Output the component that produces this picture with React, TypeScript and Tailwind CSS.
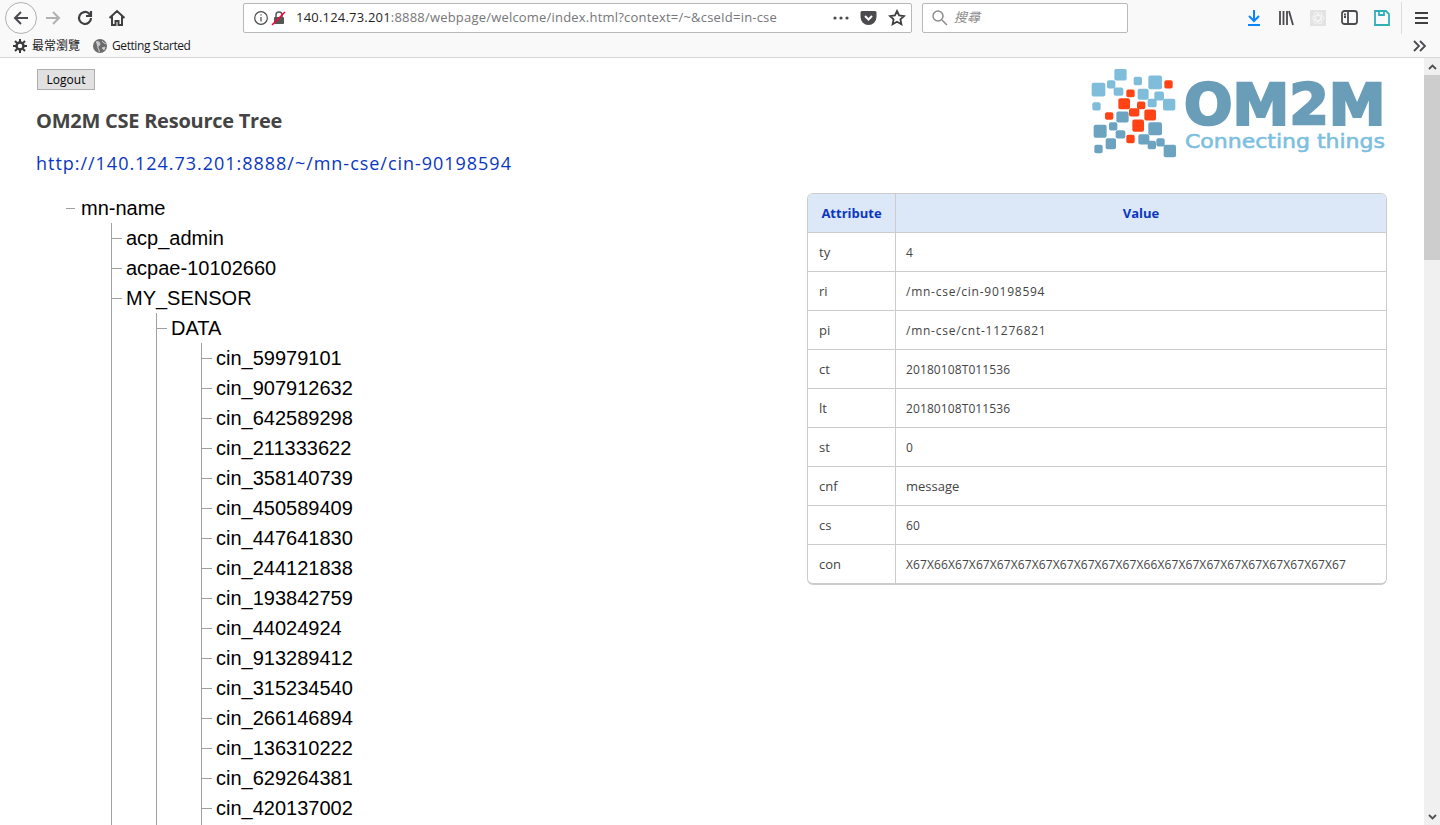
import React from "react";

const cins = ["cin_59979101","cin_907912632","cin_642589298","cin_211333622","cin_358140739","cin_450589409","cin_447641830","cin_244121838","cin_193842759","cin_44024924","cin_913289412","cin_315234540","cin_266146894","cin_136310222","cin_629264381","cin_420137002"];

const num = "text-[12px] tracking-[0.1px]";
const path = "text-[12px] tracking-[0.75px]";
const rows: [string, string, string][] = [
  ["ty","4",num],["ri","/mn-cse/cin-90198594",path],["pi","/mn-cse/cnt-11276821",path],["ct","20180108T011536",num],["lt","20180108T011536",num],["st","0",num],["cnf","message",""],["cs","60",num],["con","X67X66X67X67X67X67X67X67X67X67X67X66X67X67X67X67X67X67X67X67X67",num],
];

function Node({ label, top }: { label: string; top?: boolean }) {
  return (
    <div className="flex items-center h-[30px] whitespace-nowrap">
      <span className={top ? "w-[9px] h-px bg-[#a0a0a0] mr-[6px] shrink-0" : "w-[10px] h-px bg-[#a0a0a0] mr-[4px] shrink-0"} />
      <span>{label}</span>
    </div>
  );
}

const blue = "#7fbddb", red = "#ff4314", mid = "#6ba3c0";
const squares: [number, number, number, number, string][] = [
  [106,28,34,32,blue],[164,52,22,22,blue],[208,48,38,38,blue],[38,70,38,38,blue],[84,62,22,22,blue],[104,84,26,22,blue],[176,88,30,30,blue],[226,96,26,24,blue],[252,118,34,32,blue],[206,118,24,22,blue],[40,128,22,22,blue],
  [256,62,22,22,red],[142,90,22,20,red],[118,116,32,30,red],[174,126,22,20,red],[150,146,28,22,red],[196,150,32,30,red],[78,158,22,20,red],[160,180,32,34,red],[142,226,22,22,red],
  [112,156,34,30,mid],[90,188,22,22,mid],[44,196,36,36,mid],[110,212,26,22,mid],[80,236,28,30,mid],[208,188,38,36,mid],[178,224,30,28,mid],[206,244,22,22,mid],[232,236,22,22,mid],[254,256,34,34,mid],[46,256,22,22,mid],
];

function Logo() {
  return (
    <svg width="296" height="90" viewBox="0 0 296 90">
      {squares.map(([x, y, w, h, c], i) => (
        <rect key={i} x={(x - 36) / 3} y={(y - 27) / 3 - 0.5} width={w / 3 + 1} height={h / 3 + 1} rx="2" fill={c} />
      ))}
      <text x="93" y="56" fill="#6a9db8" stroke="#6a9db8" strokeWidth="2.500" fontFamily="'DejaVu Sans', sans-serif" fontWeight="700" fontSize="57">OM2M</text>
      <text x="94" y="79" textLength="200" lengthAdjust="spacingAndGlyphs" fill="#7dbfe0" stroke="#7dbfe0" strokeWidth="0.6" fontFamily="'DejaVu Sans', sans-serif" fontSize="20">Connecting things</text>
    </svg>
  );
}

export default function App() {
  return (
    <div className="h-screen w-full overflow-hidden flex flex-col bg-white font-['Liberation_Sans',sans-serif]">
      <header className="h-[58px] shrink-0 bg-[#f9f9fa] border-b border-[#d7d7db] flex flex-col font-['Open_Sans','Noto_Sans_CJK_TC',sans-serif]">
        <div className="h-[35px] flex items-center">
          <div className="ml-[5px] w-[32px] h-[32px] rounded-full border border-[#b1b1b3] bg-[#fbfbfb] flex items-center justify-center">
            <svg width="18" height="18" viewBox="0 0 18 18" fill="none" stroke="#4a4a4f" strokeWidth="2"><path d="M16 9H3M9 3L3 9l6 6" /></svg>
          </div>
          <svg className="ml-[7px]" width="18" height="18" viewBox="0 0 18 18" fill="none" stroke="#b1b1b3" strokeWidth="2"><path d="M2 9h13M9 3l6 6-6 6" /></svg>
          <svg className="ml-[14px]" width="18" height="18" viewBox="0 0 18 18" fill="none" stroke="#3f3f42" strokeWidth="2.200"><path d="M15 9a6 6 0 1 1-2-4.500L15 7M15 2v5h-5" /></svg>
          <svg className="ml-[14px]" width="18" height="18" viewBox="0 0 18 18" fill="none" stroke="#3f3f42" strokeWidth="2"><path d="M1.500 9L9 2l7.500 7M4 7.500V16h3.500v-4h3v4H14V7.500" /></svg>
          <div className="ml-[117px] w-[669px] h-[30px] bg-white border border-[#b9b9b9] rounded-[2px] flex items-center text-[13px]">
            <svg className="ml-[9px]" width="16" height="16" viewBox="0 0 16 16" fill="none" stroke="#4a4a4f" strokeWidth="1.200"><circle cx="8" cy="8" r="6.300" /><path d="M8 7v4.500M8 4.200v1.400" /></svg>
            <svg className="ml-[2px]" width="16" height="16" viewBox="0 0 16 16"><rect x="3" y="7" width="10" height="7" rx="1" fill="#555" /><path d="M5 7V5a3 3 0 0 1 6 0v2" fill="none" stroke="#555" strokeWidth="1.500" /><path d="M1 15L14 2" stroke="#ff0039" strokeWidth="1.600" /></svg>
            <span className="ml-[9px] tracking-[0.2px] whitespace-nowrap text-[#1f1f1f]">140.124.73.201<span className="text-[#767679]">:8888/webpage/welcome/index.html?context=/~&amp;cseId=in-cse</span></span>
            <div className="ml-auto flex items-center">
              <svg width="18" height="6" viewBox="0 0 18 6" fill="#4a4a4f"><circle cx="3" cy="3" r="1.600" /><circle cx="9" cy="3" r="1.600" /><circle cx="15" cy="3" r="1.600" /></svg>
              <svg className="ml-[10px]" width="17" height="16" viewBox="0 0 17 16"><path d="M2 1h13a1.500 1.500 0 0 1 1.500 1.500V7a8 8 0 0 1-16 0V2.500A1.500 1.500 0 0 1 2 1z" fill="#4a4a4f" /><path d="M5 6l3.500 3.500L12 6" fill="none" stroke="#fff" strokeWidth="2" /></svg>
              <svg className="ml-[11px] mr-[5px]" width="18" height="18" viewBox="0 0 18 18" fill="none" stroke="#3f3f42" strokeWidth="1.800"><path d="M9 2l2.100 4.500 4.900.6-3.600 3.300 1 4.900L9 12.800l-4.400 2.500 1-4.900L2 7.100l4.900-.6z" /></svg>
            </div>
          </div>
          <div className="ml-[10px] w-[206px] h-[30px] bg-white border border-[#b9b9b9] rounded-[2px] flex items-center">
            <svg className="ml-[8px]" width="17" height="17" viewBox="0 0 17 17" fill="none" stroke="#8c8c8e" strokeWidth="1.500"><circle cx="7" cy="7" r="5" /><path d="M11 11l5 5" /></svg>
            <span className="ml-[6px] text-[13px] italic text-[#8a8a8a]">搜尋</span>
          </div>
          <svg className="ml-[119px]" width="14" height="16" viewBox="0 0 14 16" fill="none" stroke="#0a84ff" strokeWidth="2"><path d="M7 0v10M2 6l5 5 5-5M1 15h12" /></svg>
          <svg className="ml-[17px]" width="16" height="16" viewBox="0 0 16 16" fill="none" stroke="#4a4a4f" strokeWidth="1.800"><path d="M2 1v14M5.500 1v14M9 1v14M11 1l4 14" /></svg>
          <div className="ml-[16px] w-[16px] h-[16px] bg-[#e3e3e3] flex items-center justify-center">
            <svg width="14" height="14" viewBox="0 0 14 14" fill="none" stroke="#f6f6f6" strokeWidth="0.900"><ellipse cx="7" cy="7" rx="6" ry="2.500" /><ellipse cx="7" cy="7" rx="6" ry="2.500" transform="rotate(60 7 7)" /><ellipse cx="7" cy="7" rx="6" ry="2.500" transform="rotate(120 7 7)" /></svg>
          </div>
          <svg className="ml-[15px]" width="17" height="15" viewBox="0 0 17 15" fill="none" stroke="#4a4a4f" strokeWidth="1.800"><rect x="1" y="1" width="15" height="13" rx="2.500" /><path d="M7 1v13M3 4.500h2M3 7h2" /></svg>
          <svg className="ml-[16px]" width="16" height="16" viewBox="0 0 16 16" fill="none" stroke="#2fb0b6" strokeWidth="1.800"><path d="M1 1h11l3 3v11H1zM5 1v4h5V1" /></svg>
          <div className="ml-[11px] w-px h-[32px] bg-[#dcdcdf]" />
          <svg className="ml-[13px]" width="13" height="12" viewBox="0 0 13 12" fill="none" stroke="#3f3f42" strokeWidth="2"><path d="M0 1h13M0 6h13M0 11h13" /></svg>
        </div>
        <div className="flex-1 flex items-center text-[12px] text-[#1a1a1a]">
          <svg className="ml-[13px]" width="14" height="14" viewBox="0 0 14 14"><circle cx="7" cy="7" r="3.500" fill="none" stroke="#3a3a3c" strokeWidth="2.500" /><path d="M7 0v3M7 11v3M0 7h3M11 7h3M2 2l2 2M10 10l2 2M2 12l2-2M10 4l2-2" stroke="#3a3a3c" strokeWidth="2" /></svg>
          <span className="ml-[5px]">最常瀏覽</span>
          <svg className="ml-[13px]" width="14" height="14" viewBox="0 0 14 14"><circle cx="7" cy="7" r="7" fill="#6b6b6e" /><path d="M3 3c2-1 4 0 4 2S4 7 5 9s2 3 1 4M9 2c1 2 3 2 4 3M9 9l3-1-1 3z" fill="#c9c9cb" stroke="#c9c9cb" /></svg>
          <span className="ml-[5px] tracking-[-0.42px]">Getting Started</span>
          <svg className="ml-auto mr-[13px]" width="14" height="12" viewBox="0 0 14 12" fill="none" stroke="#4a4a4f" strokeWidth="1.800"><path d="M1 1l5 5-5 5M7 1l5 5-5 5" /></svg>
        </div>
      </header>

      <div className="flex-1 min-h-0 flex">
        <main className="flex-1 min-w-0 flex justify-between overflow-hidden">
          <div className="pl-[36px]">
            <button className="block ml-px mt-[11px] w-[58px] h-[21px] pt-px bg-[#e1e1e1] border border-[#adadad] text-[12px] text-black font-['Open_Sans',sans-serif]">Logout</button>
            <h2 className="mt-[17px] h-[27px] leading-[27px] text-[20px] font-bold tracking-[-0.25px] text-[#444] font-['Open_Sans',sans-serif] whitespace-nowrap">OM2M CSE Resource Tree</h2>
            <a className="block mt-[16px] h-[26px] leading-[26px] text-[18px] tracking-[0.97px] text-[#0a37c0] font-['Open_Sans',sans-serif] whitespace-nowrap">http://140.124.73.201:8888/~/mn-cse/cin-90198594</a>
            <div className="mt-[17px] ml-[30px] text-[20px] text-black">
              <Node label="mn-name" top />
              <div className="ml-[45px] border-l border-[#a0a0a0]">
                <Node label="acp_admin" />
                <Node label="acpae-10102660" />
                <Node label="MY_SENSOR" />
                <div className="ml-[44px] border-l border-[#a0a0a0]">
                  <Node label="DATA" />
                  <div className="ml-[44px] border-l border-[#a0a0a0] pb-[10px]">
                    {cins.map((c) => <Node key={c} label={c} />)}
                  </div>
                </div>
              </div>
            </div>
          </div>
          <div className="w-[580px] mr-[37px] shrink-0 flex flex-col items-end">
            <div className="mt-[11px] h-[90px]"><Logo /></div>
            <table className="mt-[34px] w-full border-separate border-spacing-0 border-2 border-t border-r border-l border-[#cccccc] rounded-[6px] text-[13px] text-[#444] font-['Open_Sans',sans-serif] overflow-hidden">
              <thead>
                <tr className="h-[39px] bg-[#dce8f8] text-[#0b37bf]">
                  <th className="w-[88px] pt-px border-b border-r border-[#ccc] font-bold">Attribute</th>
                  <th className="pt-px border-b border-[#ccc] font-bold">Value</th>
                </tr>
              </thead>
              <tbody>
                {rows.map(([a, b, cls], i) => {
                  const last = i === rows.length - 1;
                  return (
                    <tr key={a} className={last ? "h-[38px]" : "h-[39px]"}>
                      <td className={`pl-[11px] pt-px border-r border-[#ccc] ${last ? "" : "border-b"}`}>{a}</td>
                      <td className={`pl-[10px] pt-px border-[#ccc] ${last ? "" : "border-b"} ${cls}`}>{b}</td>
                    </tr>
                  );
                })}
              </tbody>
            </table>
          </div>
        </main>
        <div className="w-[16px] shrink-0 bg-[#f0f0f0] flex flex-col items-center">
          <div className="h-[17px] flex items-center">
            <svg width="9" height="6" viewBox="0 0 9 6" fill="none" stroke="#505050" strokeWidth="1.800"><path d="M1 5l3.500-3.500L8 5" /></svg>
          </div>
          <div className="w-full h-[185px] bg-[#cdcdcd]" />
          <div className="mt-auto h-[17px] flex items-center">
            <svg width="9" height="6" viewBox="0 0 9 6" fill="none" stroke="#505050" strokeWidth="1.800"><path d="M1 1l3.500 3.500L8 1" /></svg>
          </div>
        </div>
      </div>
    </div>
  );
}
